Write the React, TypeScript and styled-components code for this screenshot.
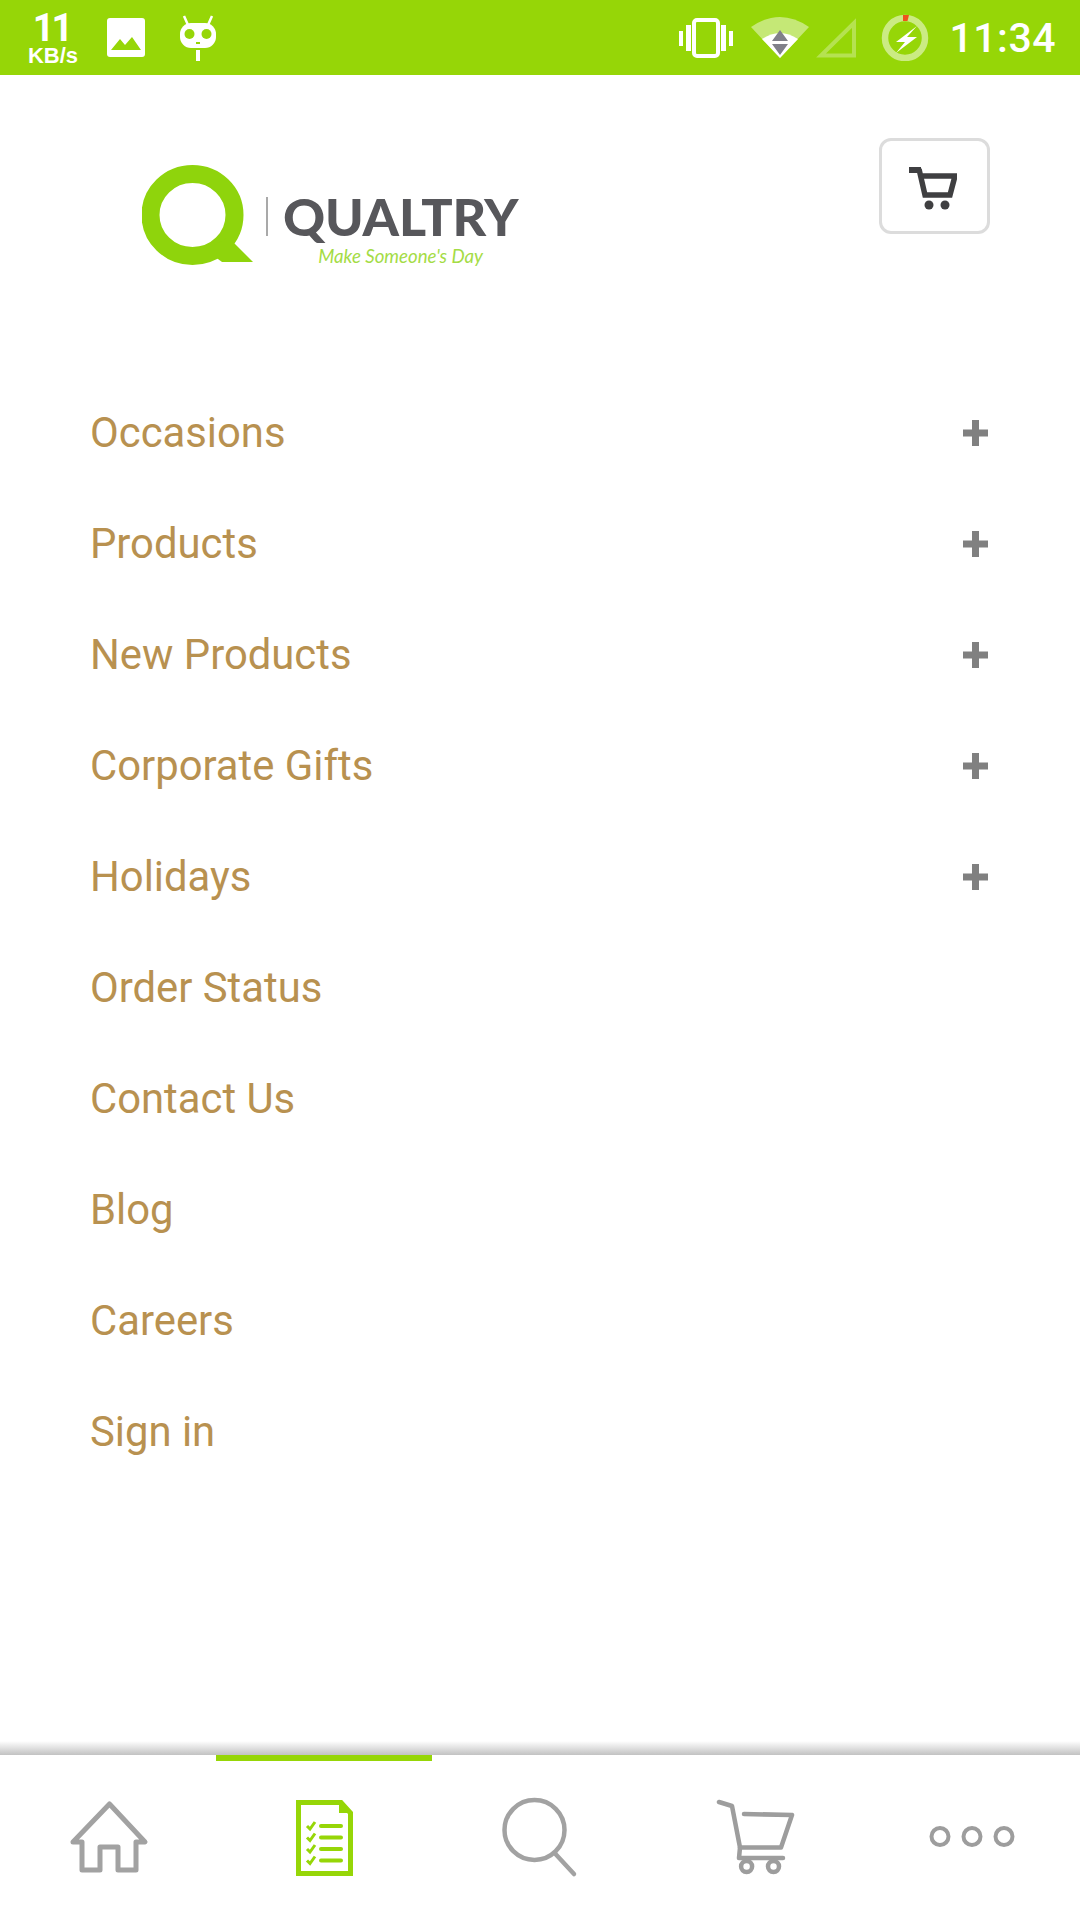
import styled, { createGlobalStyle } from 'styled-components'

const MENU = [
  { label: 'Occasions', expandable: true },
  { label: 'Products', expandable: true },
  { label: 'New Products', expandable: true },
  { label: 'Corporate Gifts', expandable: true },
  { label: 'Holidays', expandable: true },
  { label: 'Order Status' },
  { label: 'Contact Us' },
  { label: 'Blog' },
  { label: 'Careers' },
  { label: 'Sign in' },
]

export default function App() {
  return (
    <Root>
      <GlobalStyle />
      <StatusBar>
        <NetSpeed>
          <NetValue>11</NetValue>
          <NetUnit>KB/s</NetUnit>
        </NetSpeed>
        <ImageIcon />
        <RobotIcon />
        <StatusRight>
          <VibrateIcon />
          <WifiIcon />
          <SignalIcon />
          <BatteryIcon />
          <Clock>11:34</Clock>
        </StatusRight>
      </StatusBar>

      <Header>
        <Logo>
          <LogoMark />
          <LogoDivider />
          <Wordmark>
            <BrandName>QUALTRY</BrandName>
            <Tagline>Make Someone's Day</Tagline>
          </Wordmark>
        </Logo>
        <CartButton>
          <HeaderCartIcon />
        </CartButton>
      </Header>

      <Menu>
        {MENU.map((item) => (
          <MenuRow key={item.label}>
            <MenuLabel>{item.label}</MenuLabel>
            {item.expandable && <PlusIcon />}
          </MenuRow>
        ))}
      </Menu>

      <TabShadow />
      <TabBar>
        <Tab>
          <HomeIcon />
        </Tab>
        <Tab $active>
          <OrdersIcon />
        </Tab>
        <Tab>
          <SearchIcon />
        </Tab>
        <Tab>
          <TabCartIcon />
        </Tab>
        <Tab>
          <MoreIcon />
        </Tab>
      </TabBar>
    </Root>
  )
}

// Status bar icons

function ImageIcon() {
  return (
    <ImageSvg width="38" height="39" viewBox="0 0 38 39">
      <rect width="38" height="39" rx="3" fill="#fff" />
      <path d="M4 32 L13 21 L18 27 L25 19 L34 32 Z" fill="#96d607" />
    </ImageSvg>
  )
}

function RobotIcon() {
  return (
    <RobotSvg width="36" height="46" viewBox="0 0 36 46">
      <path d="M4 1 L8 10 M32 1 L28 10" stroke="#fff" strokeWidth="2.5" />
      <rect x="0" y="8" width="36" height="25" rx="11" fill="#fff" />
      <circle cx="9.5" cy="19" r="5" fill="#96d607" />
      <circle cx="26.5" cy="19" r="5" fill="#96d607" />
      <rect x="16" y="27" width="4" height="2" fill="#96d607" />
      <rect x="16" y="35" width="4" height="11" fill="#fff" />
    </RobotSvg>
  )
}

function VibrateIcon() {
  return (
    <svg width="54" height="40" viewBox="0 0 54 40">
      <rect x="15" y="2" width="24" height="36" rx="3" fill="none" stroke="#fff" strokeWidth="4" />
      <path d="M0 13 h4 v15 h-4 Z M7 7 h5 v26 h-5 Z M42 7 h5 v26 h-5 Z M50 13 h4 v15 h-4 Z" fill="#fff" />
    </svg>
  )
}

function WifiIcon() {
  return (
    <WifiSvg width="58" height="41" viewBox="0 0 58 41">
      <path d="M0 10 Q29 -10 58 10 L29 41 Z" fill="#fff" fillOpacity="0.45" />
      <path d="M11 22 Q29 10 47 22 L29 41 Z" fill="#fff" />
      <path d="M29 13 L37 24 H21 Z M21 27 H37 L29 38 Z" fill="#80808a" />
    </WifiSvg>
  )
}

function SignalIcon() {
  return (
    <SignalSvg width="42" height="41" viewBox="0 0 42 41">
      <path d="M39 6 V38.5 H6 Z" fill="none" stroke="#fff" strokeOpacity="0.3" strokeWidth="4" />
    </SignalSvg>
  )
}

function BatteryIcon() {
  return (
    <BatterySvg width="48" height="47" viewBox="0 0 48 47">
      <circle cx="24" cy="24" r="20" fill="none" stroke="#fff" strokeOpacity="0.5" strokeWidth="6.5" />
      <path d="M22 1 H28 L26.5 7 H22 Z" fill="#f0531c" />
      <path d="M36 12 L15 28 H24 L15 39 L36 23 H26 Z" fill="#fff" />
    </BatterySvg>
  )
}

// Logo and header

function LogoMark() {
  return (
    <svg width="112" height="100" viewBox="0 0 112 100">
      <ellipse cx="50.5" cy="50" rx="42" ry="41" fill="none" stroke="#8fd40c" strokeWidth="18" />
      <path d="M86 72 L111 97 H80 L64 85 Z" fill="#8fd40c" />
    </svg>
  )
}

function HeaderCartIcon() {
  return (
    <svg width="48" height="44" viewBox="0 0 48 44" fill="none">
      <path d="M0 3 H12" stroke="#3f3f41" strokeWidth="6" />
      <path d="M10 2 L16 28 H41 L46 9 H13" stroke="#3f3f41" strokeWidth="5.5" />
      <circle cx="20" cy="38" r="4.5" fill="#3f3f41" />
      <circle cx="36" cy="38" r="4.5" fill="#3f3f41" />
    </svg>
  )
}

function PlusIcon() {
  return (
    <svg width="25" height="26" viewBox="0 0 25 26">
      <path d="M9 0 H16 V9.5 H25 V16.5 H16 V26 H9 V16.5 H0 V9.5 H9 Z" fill="#808080" />
    </svg>
  )
}

// Tab bar icons

function HomeIcon() {
  return (
    <svg width="90" height="90" viewBox="0 0 90 90" fill="none">
      <path
        d="M10 48 L46.5 10 L82 48 H73 V76 H55 V53 H37 V76 H19 V48 Z"
        stroke="#a2a2a2"
        strokeWidth="5"
        strokeLinejoin="round"
      />
    </svg>
  )
}

function OrdersIcon() {
  return (
    <svg width="90" height="90" viewBox="0 0 90 90" fill="none">
      <path d="M19.5 8.5 H62 L71.5 19 V79.5 H19.5 Z" stroke="#96d607" strokeWidth="5" />
      <path d="M60 6 L74 19 H60 Z" fill="#96d607" />
      {[32, 43.5, 55, 66.5].map((y) => (
        <g key={y}>
          <path d={`M28 ${y} l3 3 l5 -7`} stroke="#96d607" strokeWidth="3" />
          <path d={`M42 ${y} H62`} stroke="#96d607" strokeWidth="4" strokeLinecap="round" />
        </g>
      ))}
    </svg>
  )
}

function SearchIcon() {
  return (
    <svg width="90" height="90" viewBox="0 0 90 90" fill="none">
      <circle cx="39.5" cy="36" r="30" stroke="#a2a2a2" strokeWidth="4.5" />
      <path d="M60.5 60 L79 80" stroke="#a2a2a2" strokeWidth="4.5" strokeLinecap="round" />
    </svg>
  )
}

function TabCartIcon() {
  return (
    <svg width="90" height="90" viewBox="0 0 90 90" fill="none">
      <g stroke="#9d9d9d" strokeWidth="4.5" strokeLinecap="round" strokeLinejoin="round">
        <path d="M8 8 L21 12 L29 53.5 H70 L81 21 L33 20" />
        <path d="M29 53.5 L28 64 H72" />
        <circle cx="35.6" cy="72.5" r="5.5" />
        <circle cx="62.5" cy="72.5" r="5.5" />
      </g>
    </svg>
  )
}

function MoreIcon() {
  return (
    <svg width="90" height="90" viewBox="0 0 90 90" fill="none">
      {[13, 45, 77].map((cx) => (
        <circle key={cx} cx={cx} cy="42.5" r="8.5" stroke="#9d9d9d" strokeWidth="4" />
      ))}
    </svg>
  )
}

// Styled Components

const GlobalStyle = createGlobalStyle`
  html, body {
    margin: 0;
    padding: 0;
    background: #fff;
  }
`

const Root = styled.div`
  width: 1080px;
  height: 1920px;
  display: flex;
  flex-direction: column;
  overflow: hidden;
  background: #fff;
  font-family: Roboto, sans-serif;
`

const StatusBar = styled.div`
  height: 75px;
  flex: none;
  display: flex;
  align-items: center;
  padding: 0 24px 0 28px;
  background: #96d607;
  color: #fff;
`

const NetSpeed = styled.div`
  width: 50px;
  display: flex;
  flex-direction: column;
  align-items: center;
  font-weight: 700;
`

const NetValue = styled.div`
  font-size: 38px;
  line-height: 36px;
  letter-spacing: -3px;
  margin-left: -3px;
`

const NetUnit = styled.div`
  font-family: 'Liberation Sans', sans-serif;
  font-size: 22px;
  line-height: 19px;
`

const ImageSvg = styled.svg`
  margin-left: 29px;
`

const RobotSvg = styled.svg`
  margin-left: 35px;
  margin-top: 1px;
`

const StatusRight = styled.div`
  margin-left: auto;
  display: flex;
  align-items: center;
`

const WifiSvg = styled.svg`
  margin-left: 18px;
`

const SignalSvg = styled.svg`
  margin-left: 6px;
`

const BatterySvg = styled.svg`
  margin-left: 24px;
`

const Clock = styled.div`
  margin-left: 20px;
  font-size: 41px;
  font-weight: 500;
  letter-spacing: 0.5px;
`

const Header = styled.div`
  height: 302px;
  flex: none;
  box-sizing: border-box;
  padding: 63px 90px 0 142px;
  display: flex;
  align-items: flex-start;
  justify-content: space-between;
`

const Logo = styled.div`
  margin-top: 27px;
  display: flex;
  align-items: flex-start;
`

const LogoDivider = styled.div`
  width: 2px;
  height: 39px;
  margin: 32px 0 0 12px;
  background: #a9a9a9;
`

const Wordmark = styled.div`
  margin-left: 15px;
  display: flex;
  flex-direction: column;
  align-items: center;
`

const BrandName = styled.div`
  margin-top: 26px;
  font-family: Lato, sans-serif;
  font-weight: 900;
  font-size: 52px;
  line-height: 50px;
  letter-spacing: -0.2px;
  color: #57575b;
`

const Tagline = styled.div`
  margin-top: 3px;
  font-family: Lato, sans-serif;
  font-style: italic;
  font-size: 18.7px;
  line-height: 24px;
  color: #a4dc45;
`

const CartButton = styled.div`
  width: 111px;
  height: 96px;
  box-sizing: border-box;
  padding: 5px 3px 0 0;
  display: flex;
  align-items: center;
  justify-content: center;
  border: 3px solid #dcdcdc;
  border-radius: 12px;
`

const Menu = styled.div`
  flex: 1;
  padding: 0 92px 0 90px;
`

const MenuRow = styled.div`
  height: 111px;
  display: flex;
  align-items: center;
  justify-content: space-between;
`

const MenuLabel = styled.div`
  font-size: 41.8px;
  color: #b89150;
`

const TabShadow = styled.div`
  height: 14px;
  flex: none;
  background: linear-gradient(to bottom, #ffffff, #c2c2c2);
`

const TabBar = styled.div`
  height: 165px;
  flex: none;
  display: grid;
  grid-template-columns: repeat(5, 216px);
`

const Tab = styled.div<{ $active?: boolean }>`
  box-sizing: border-box;
  padding-top: 33px;
  display: flex;
  justify-content: center;
  align-items: flex-start;
  border-top: 6px solid ${(p) => (p.$active ? '#96d607' : 'transparent')};
`
